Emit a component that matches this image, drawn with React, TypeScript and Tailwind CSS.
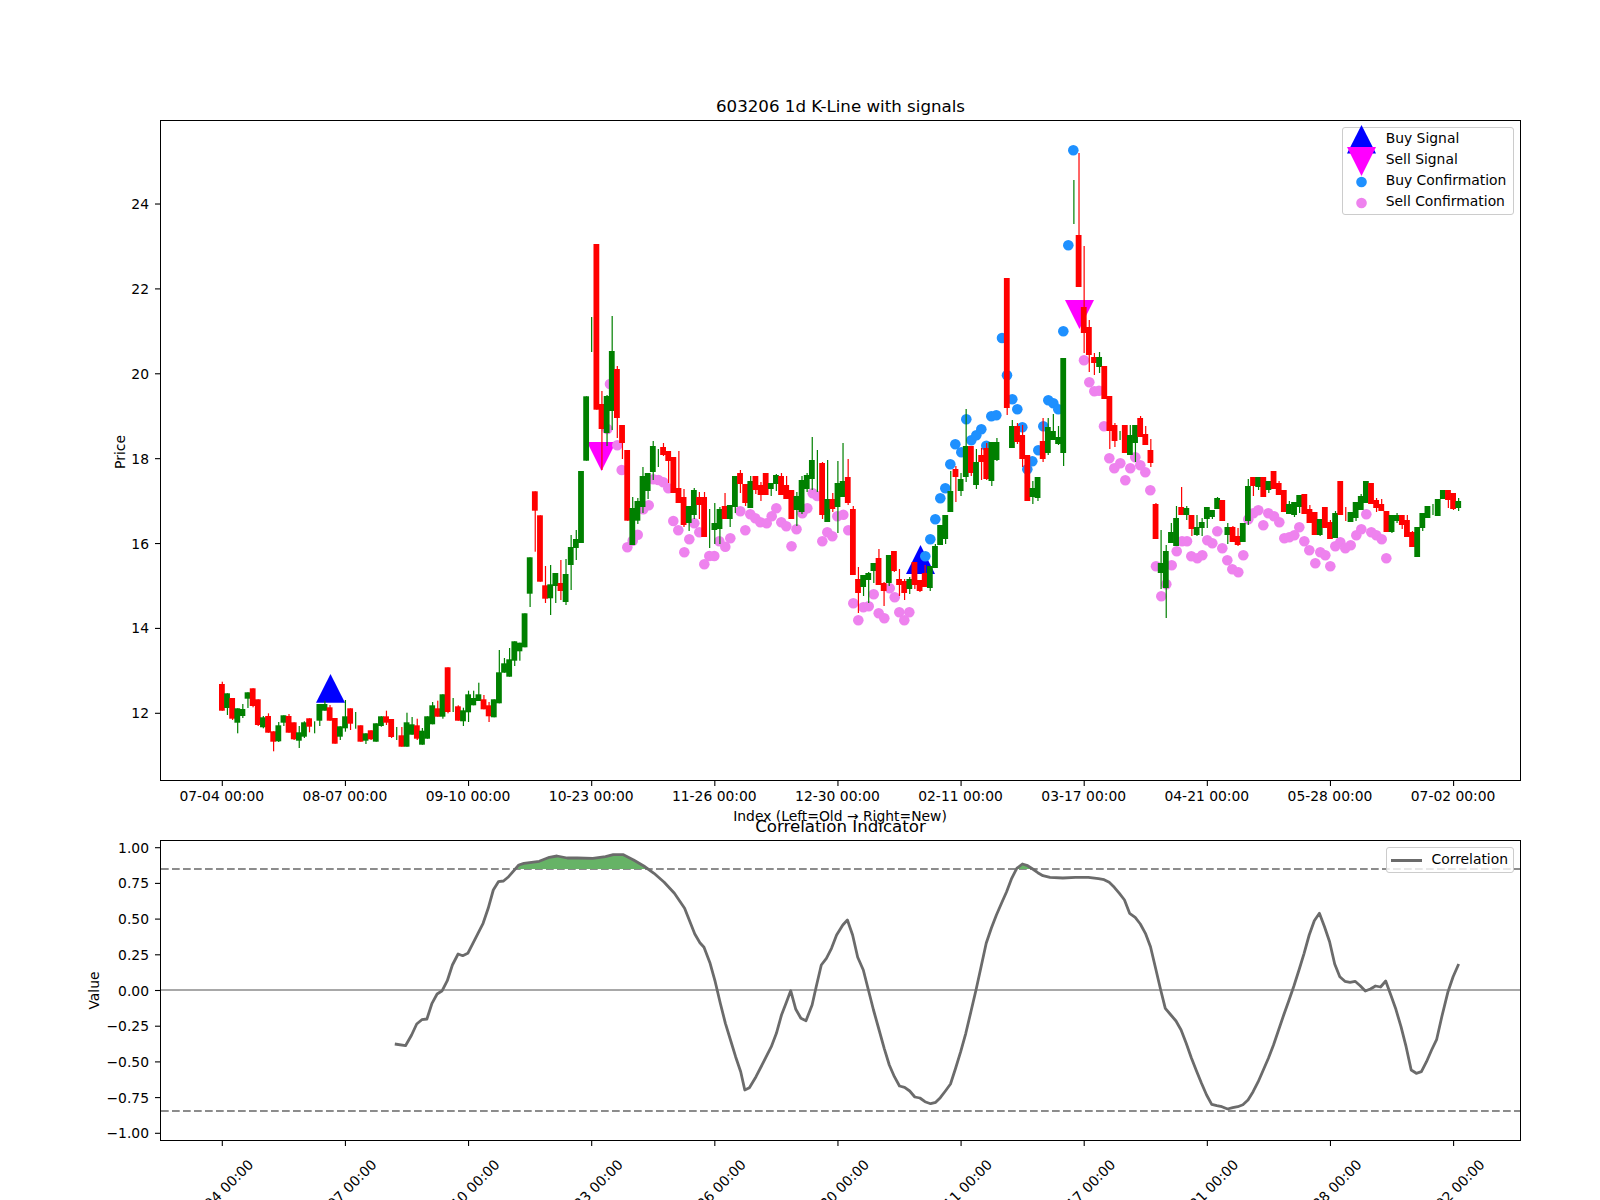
type Candle = [number, 'r' | 'g', number, number, number?, number?];

// index, colour, body top, body bottom, wick top, wick bottom (page px)
const candles: Candle[] = [
  [0,'r',684,710.7,681.7],[1,'g',693.3,708,693.3,715],[2,'r',698,718.7,698,720],[3,'g',708.3,722.7,708.3,733.3],
  [4,'g',709,716,704,718],[5,'g',692.3,698.7,692.3,708],[6,'r',688.3,706,688.3,707.3],[7,'r',699.3,725,699.3,726],
  [8,'g',717.3,727.3,716,728.3],[9,'r',716,732.7,713.3],[10,'r',731.3,741.7,731.3,751.3],[11,'g',725.3,741.3,722,742],
  [12,'g',715.3,722.7,715.3,726],[13,'r',716,732.7,714],[14,'r',722.3,739.3,722.3,740],[15,'g',732.3,740.7,726,748],
  [16,'g',722.3,736.7,721.3,738],[17,'r',718.3,726.7,718.3,732.3],[18,'g',727,727,721.3,733.3],[19,'g',704,720.7,704,726],
  [20,'g',704,710.7,700.7],[21,'r',707.3,720.7,705],[22,'r',718,743.7],[23,'g',726.3,736.7,726.3,740],
  [24,'g',716.3,728.3,700,731.7],[25,'r',708.3,723.7,708.3,730],[26,'g',720,720,712,728.7],[27,'r',725.3,741.7],
  [28,'g',733.3,740.7,733.3,744],[29,'r',730.3,739.3,730.3,740],[30,'g',723.3,741.7],[31,'g',716.3,726,716.3,726.7],
  [32,'r',716.3,722.7,710.7,725],[33,'r',719,737,719,738],[34,'g',733,733,727,740],[35,'r',735.3,746.7,727],
  [36,'g',722.3,746.7,712.7],[37,'g',724.3,734.7,717],[38,'r',725.3,738.7,718.7,740],[39,'g',730.7,744.7,728],
  [40,'g',716.3,738.7],[41,'g',705.3,724.3,702],[42,'r',708.3,716.7,700.7],[43,'g',694.3,716.7,694.3,718.7],
  [44,'r',667.3,712,667.3,713.3],[45,'g',705,705,698,712],[46,'r',706.3,720.7,705.3],[47,'g',710.3,721.3,707.7,726],
  [48,'g',694.3,712.3,690.7,722],[49,'g',698,705.3,690.7],[50,'g',694.3,701,682.7],[51,'r',699.3,709.3,695],
  [52,'r',705.3,716.3,702,722],[53,'g',699.3,717.3],[54,'g',672.3,703.3,650],[55,'g',663.3,672.7,658],
  [56,'g',659.3,676.7,648],[57,'g',641.3,660.7,641.3,666],[58,'g',642.7,651.3,642.7,660.7],[59,'g',613.3,647.3],
  [60,'g',557.3,593.7,557.3,607],[61,'r',491.3,510.7,491.3,551.7],[62,'r',515.3,581.7],[63,'r',585.3,598.7,566,603],
  [64,'g',584.3,598.3,565,615],[65,'g',573,586,573,603],[66,'r',583,591,560,600],[67,'g',574,602,559,605],
  [68,'g',547,565,535,590],[69,'g',539,548,530,560],[70,'g',471,543],[71,'g',396.3,460.7],[72,'g',335,335,317,352],
  [73,'r',244,409.7],[74,'r',404,429,391,470],[75,'g',396,433,395,446],[76,'g',351,411,316,430],[77,'r',369,418,366,438],
  [78,'r',425,443,425,459],[79,'r',450,520.7],[80,'g',508,545,497],[81,'g',501,520.7,498,524],[82,'g',476,507,467,513],
  [83,'g',473,491,473,499],[84,'g',446,472,441,480],[85,'g',458,458,449,467],[86,'r',447,455,443,456],[87,'r',451,461,451,483],
  [88,'r',457,493],[89,'r',488,503,451],[90,'r',497,525,489,527],[91,'g',506,523,506,531],[92,'g',490,515,488,519],
  [93,'r',497,505,492,519],[94,'r',497,537,492],[95,'g',528,528,509,548],[96,'g',523,530,503,544],[97,'g',509,529,507,544],
  [98,'r',506,519,493],[99,'g',505,519,505,527],[100,'g',476,507,476,513],[101,'r',473,484,470,493],[102,'r',484,503,484,506],
  [103,'g',481,508,476],[104,'r',476,490,476,494],[105,'r',485,495,482,501],[106,'r',473,495],[107,'g',483,489,483,496],
  [108,'g',475,484,474,491],[109,'r',476,495,473],[110,'r',485,499,476],[111,'r',490,519],[112,'g',496,510,492,526],
  [113,'g',480,512,476,514],[114,'g',475,489,473,492],[115,'g',460,479,437,490],[116,'g',471,471,450,492],[117,'r',463,515,462,519],
  [118,'g',499,522,460],[119,'r',499,509,493,512],[120,'g',483,507,461,533],[121,'g',481,497,443],[122,'r',477,503,459,505],
  [123,'r',509,575,506],[124,'r',579,593,567,613],[125,'g',575,587,575,596],[126,'g',573,580,572,603],[127,'g',563,571,563,583],
  [128,'r',558,585,549],[129,'r',583,591,582,606],[130,'g',555,583,555,586],[131,'r',551,571,551,572],[132,'r',579,585,569,596],
  [133,'r',581,593,579,600],[134,'g',579,589,577,594],[135,'r',562,585,562,589],[136,'r',580,591,580,592],[137,'r',573,587,565],
  [138,'g',566,588,566,591],[139,'g',546,568,544],[140,'g',525,545],[141,'g',515,539,515,544],[142,'g',491,512,471],
  [143,'r',469,477,466,502],[144,'g',479,491,473,496],[145,'g',446,477,409,482],[146,'r',446,473,446,476],[147,'g',462,485,449,489],
  [148,'r',455,462,448,480],[149,'r',448,479,443,480],[150,'g',442,481,442,486],[151,'g',442,460,438,461],
  [153,'r',278,408,278,415],[154,'g',426,448,420],[155,'r',426,442,423,444],[156,'r',435,459,425,467],[157,'r',455,501],
  [158,'g',488,497,481,504],[159,'g',477,498,477,501],[160,'r',441,459,418,462],[161,'g',427,453,418,455],[162,'g',431,440,414],
  [163,'g',437,444,426,445],[164,'g',358,453,358,466],[166,'g',200,200,180,224],[167,'r',235,287,153],[168,'r',307,333,246,353],
  [169,'r',327,355,320,372],[170,'r',357,363,353,375],[171,'g',357,367,352,373],[172,'r',366,399],[173,'r',396,431,396,449],
  [174,'r',425,441,423,447],[175,'g',436,436,431,440],[176,'r',425,453],[177,'g',435,455,425],[178,'g',425,443,425,462],
  [179,'r',418,437,416],[180,'r',434,445,426],[181,'r',450,463,439,467],[182,'r',504,539,503],[183,'g',563,573,530,589],
  [184,'g',551,588,545,618],[185,'g',532,543,523],[186,'g',518,546,506],[187,'r',507,515,487],[188,'g',508,515,506,520],
  [189,'r',515,529,515,536],[190,'g',527,535,515,536],[191,'g',522,528,518,536],[192,'g',507,519,507,528],[193,'g',510,517,510,519],
  [194,'g',498,509,497],[195,'r',500,521],[196,'g',527,535,523,544],[197,'r',527,542,526],[198,'r',536,545,528,546],
  [199,'g',523,542],[200,'g',486,521,479,525],[201,'r',477,486,477,496],[202,'g',477,487,477,490],[203,'r',477,497],
  [204,'g',481,490,481,493],[205,'r',471,489],[206,'r',483,495,481],[207,'r',490,512],[208,'g',504,514,501],
  [209,'g',502,515,502,517],[210,'g',495,507,495,513],[211,'r',494,514],[212,'r',509,523,505],[213,'r',512,535],
  [214,'g',519,535,519,536],[215,'r',507,528],[216,'r',522,539,520],[217,'g',513,538,511],[218,'r',481,515],
  [219,'r',514,514,507,521],[220,'g',512,522],[221,'g',502,518,502,521],[222,'g',496,510,494],[223,'g',481,503],
  [224,'r',483,504],[225,'r',500,508,498,512],[226,'r',504,511,499],[227,'r',511,532],[228,'g',515,532,515,533],
  [229,'g',515,521,513,523],[230,'r',515,525,515,529],[231,'r',520,537,515],[232,'r',532,547,531],[233,'g',527,557],
  [234,'g',513,528,513,531],[235,'g',506,518],[236,'g',510,510,504,515],[237,'g',499,516],[238,'g',490,499],
  [239,'r',490,500,490,508],[240,'r',493,509,493,510],[241,'g',501,508,498,511],
];

const sellDots: [number, number][] = [
  [610,384],[607.3,429],[617.3,445.3],[621.7,470],[627.3,547.3],[632.7,540.7],[637.7,534.7],[643.3,509.3],[648.7,505.3],
  [653.3,479.3],[658.3,480],[663.3,482.3],[668.3,488.3],[673.3,521],[678.3,530.3],[684.3,552.3],[689.3,539.3],[694.3,523.3],
  [699.3,532.3],[704.3,564.3],[709.3,556],[714.3,556],[719.3,541.3],[725.3,546.7],[730.3,538.3],[740.3,511.3],[745.3,530.3],
  [750.3,514.3],[755.3,518.3],[760.3,522.3],[766.7,523.3],[771.7,516.3],[776.3,508.3],[781.3,522.3],[786.3,526.3],[791.5,546.3],
  [796.5,529.3],[802.3,513.3],[807.3,508.3],[812.7,493.3],[817.3,496],[822.3,541.3],[827.3,532.3],[832.3,536.3],[837.3,516.3],
  [843.3,514.7],[848.3,530.3],[853.3,603.3],[858.3,620.3],[863.3,607.3],[868.7,606.3],[873.7,594.3],[878.7,613.3],[884.3,618.3],
  [889.7,588.3],[894.7,597.3],[899.3,612.3],[904.3,620.3],[909.3,612.3],
  [1084,360.3],[1089.3,382.3],[1094.3,391.3],[1099,390.7],[1104,426.3],[1109.3,458.3],[1114.3,468.3],[1120.3,463.3],[1125.3,480.3],
  [1130.3,468.3],[1135.3,457.3],[1140.3,465.3],[1145.3,472.3],[1150.3,490.3],[1156,566.3],[1161.3,596.3],[1166.3,584.3],[1171.7,565.3],
  [1176.7,551.3],[1182,541.3],[1187,541.3],[1191.3,556.3],[1197.3,558.3],[1202.3,555.3],[1207.3,540.3],[1212.3,543.3],[1217.3,531.3],
  [1222.3,548.3],[1227.3,560.3],[1232.3,569.3],[1238.3,572.3],[1243.3,555.3],[1248.3,519.3],[1253.3,513.3],[1258.3,510.3],[1263.3,525.3],
  [1268.3,513.3],[1274,516.3],[1279.3,522.3],[1284.3,538.3],[1289.3,537.3],[1294.3,535.3],[1299.3,527.3],[1304.3,541.3],[1309.3,550.3],
  [1315.3,563.3],[1320.3,552.3],[1325.3,555.3],[1330.3,566.3],[1335.3,546.3],[1340.3,542.3],[1345.3,548.3],[1350.7,545.3],[1356.3,535.3],
  [1361.3,529.3],[1366.3,514.3],[1371.3,532.3],[1376.3,535.3],[1381.7,539.3],[1386.3,558.3],
];

const buyDots: [number, number][] = [
  [925.3,556.3],[930.3,539.3],[935.3,519.3],[940.3,498.3],[945.3,488.3],[950.3,464.3],[955.3,444.3],[961.3,452.3],[966.3,419.3],
  [971.3,440.3],[976.3,435.3],[981.3,429.3],[986.3,445.7],[991.3,416.3],[996.3,415.3],[1002,338],[1007,375.3],[1012.3,399.3],
  [1017.3,409.3],[1022.3,427.3],[1027.3,469.3],[1032.3,461.3],[1038.3,450.3],[1043.3,426.3],[1048.3,400.3],[1053.3,403.3],[1058.3,409.3],
  [1063.3,331.3],[1068.3,245.3],[1073.3,150.3],
];

// correlation line, read off two crops: x = base + X / 1.96, y = 760 + Y / 3
const corrLeft: [number, number][] = [
  [617,852],[638,857],[650,825],[660,792],[670,779],[680,777],[690,730],[700,702],[710,692],[720,662],[730,615],[741,582],[750,587],
  [760,580],[770,550],[780,520],[790,490],[800,445],[810,390],[820,365],[830,363],[840,350],[860,315],[870,310],[900,304],[920,292],
  [935,288],[955,294],[975,294],[1005,295],[1030,290],[1045,284],[1065,284],[1085,300],[1105,318],[1125,340],[1145,367],[1165,400],
  [1185,445],[1205,522],[1215,548],[1223,562],[1235,610],[1245,665],[1255,730],[1265,790],[1275,840],[1285,890],[1295,935],[1303,990],
  [1312,983],[1325,950],[1340,905],[1355,860],[1365,820],[1375,765],[1385,725],[1393,692],[1403,748],[1413,775],[1423,782],[1435,735],
  [1443,680],[1453,615],[1463,595],[1473,565],[1483,525],[1495,495],
];
const corrRight: [number, number][] = [
  [93,480],[103,525],[113,592],[124,630],[134,690],[144,750],[155,810],[165,865],[175,915],[185,950],[195,978],[205,982],[215,993],
  [225,1011],[235,1014],[245,1025],[256,1031],[266,1027],[275,1013],[285,993],[295,972],[305,925],[315,875],[325,820],[335,755],[345,690],
  [355,620],[365,550],[375,505],[385,465],[395,430],[405,395],[415,355],[425,325],[436,312],[446,317],[456,327],[466,338],[476,347],
  [490,352],[515,354],[540,352],[565,352],[585,356],[596,359],[606,367],[616,382],[626,400],[636,420],[646,460],[657,472],[667,492],
  [677,520],[687,560],[697,625],[707,690],[716,745],[727,765],[737,783],[747,810],[757,850],[767,893],[777,932],[787,970],[797,1005],
  [807,1033],[817,1037],[827,1040],[838,1047],[848,1043],[858,1040],[868,1034],[878,1020],[888,995],[898,965],[908,930],[918,895],
  [928,855],[938,810],[948,765],[958,722],[968,678],[978,630],[988,580],[998,525],[1008,482],[1018,460],[1028,500],[1038,545],[1048,612],
  [1058,650],[1068,664],[1078,667],[1088,664],[1098,677],[1108,693],[1118,687],[1128,678],[1138,681],[1148,663],[1158,705],[1168,748],
  [1178,800],[1188,860],[1198,930],[1208,940],[1218,935],[1228,905],[1238,870],[1248,838],[1258,770],[1270,695],[1280,650],[1291,612],
];

const toPage = (base: number) => ([x, y]: [number, number]): [number, number] => [base + x / 1.96, 760 + y / 3];
const corrLine = [...corrLeft.map(toPage(80)), ...corrRight.map(toPage(800))];
const pts = (list: [number, number][]) => list.map(([x, y]) => `${x.toFixed(1)},${y.toFixed(1)}`).join(' ');

const fillA = pts([
  toPage(80)([858, 327]),
  ...corrLeft.filter(([x]) => x >= 860 && x <= 1105).map(toPage(80)),
  toPage(80)([1113, 327]),
]);
const fillB = pts([[425, 327], [436, 312], [446, 317], [456, 327]].map((p) => toPage(800)(p as [number, number])));

const tickLabels = ['07-04 00:00', '08-07 00:00', '09-10 00:00', '10-23 00:00', '11-26 00:00', '12-30 00:00', '02-11 00:00', '03-17 00:00', '04-21 00:00', '05-28 00:00', '07-02 00:00'];
const tickX = (n: number) => 222.3 + n * 123.13;
const candleX = (i: number) => 222 + i * 5.13;

function KLinePlot() {
  return (
    <svg viewBox="161 121 1359 659" className="block w-full h-full overflow-visible">
      <polygon points="316,702.7 345,702.7 330.5,674" fill="#0000ff" />
      <polygon points="906,574 935,574 920.5,545" fill="#0000ff" />
      <polygon points="587,442 616,442 601.5,471" fill="#ff00ff" />
      <polygon points="1065,300 1094,300 1079.5,329" fill="#ff00ff" />
      {buyDots.map(([x, y]) => <circle key={x} cx={x} cy={y} r="5.3" fill="#1e90ff" />)}
      {sellDots.map(([x, y]) => <circle key={x} cx={x} cy={y} r="5.3" fill="#ee82ee" />)}
      {candles.map(([i, c, top, bottom, wickTop, wickBottom]) => {
        const color = c === 'r' ? '#ff0000' : '#008000';
        const x = candleX(i);
        return (
          <g key={i} fill={color}>
            <rect x={x - 0.3} y={wickTop ?? top} width="1.2" height={(wickBottom ?? bottom) - (wickTop ?? top)} />
            {bottom > top && <rect x={x - 3} y={top} width="5.8" height={bottom - top} />}
          </g>
        );
      })}
      {tickLabels.map((label, n) => (
        <g key={label}>
          <line x1={tickX(n)} x2={tickX(n)} y1="780" y2="786" stroke="black" strokeWidth="1.1" />
          <text x={tickX(n) - 0.5} y="801" textAnchor="middle" className="text-[13.89px]">{label}</text>
        </g>
      ))}
      {[12, 14, 16, 18, 20, 22, 24].map((v) => {
        const y = 713.3 - (v - 12) * 42.44;
        return (
          <g key={v}>
            <line x1="155" x2="160" y1={y} y2={y} stroke="black" strokeWidth="1.1" />
            <text x="149" y={y + 5} textAnchor="end" className="text-[13.89px]">{v}</text>
          </g>
        );
      })}
      <text transform="translate(124.5 452) rotate(-90)" textAnchor="middle" className="text-[13.89px]">Price</text>
      <text x="840" y="821" textAnchor="middle" className="text-[13.89px]">Index (Left=Old → Right=New)</text>
    </svg>
  );
}

function CorrelationPlot() {
  return (
    <svg viewBox="161 841 1359 299" className="block w-full h-full overflow-visible">
      <line x1="161" x2="1520" y1="869" y2="869" stroke="#8c8c8c" strokeWidth="2.1" strokeDasharray="7.7 3.3" />
      <line x1="161" x2="1520" y1="1111" y2="1111" stroke="#8c8c8c" strokeWidth="2.1" strokeDasharray="7.7 3.3" />
      <line x1="161" x2="1520" y1="990" y2="990" stroke="#a8a8a8" strokeWidth="2.1" />
      <polygon points={fillA} fill="#66b366" />
      <polygon points={fillB} fill="#66b366" />
      <polyline points={pts(corrLine)} fill="none" stroke="#6b6b6b" strokeWidth="2.8" strokeLinejoin="round" />
      {tickLabels.map((label, n) => (
        <g key={label}>
          <line x1={tickX(n)} x2={tickX(n)} y1="1140" y2="1146" stroke="black" strokeWidth="1.1" />
          <text transform={`translate(${tickX(n) + 2} 1195.5) rotate(-45)`} textAnchor="middle" className="text-[13.89px]">{label}</text>
        </g>
      ))}
      {['1.00', '0.75', '0.50', '0.25', '0.00', '−0.25', '−0.50', '−0.75', '−1.00'].map((v, n) => {
        const y = 847.7 + n * 35.7;
        return (
          <g key={v}>
            <line x1="155" x2="160" y1={y} y2={y} stroke="black" strokeWidth="1.1" />
            <text x="149" y={y + 5} textAnchor="end" className="text-[13.89px]">{v}</text>
          </g>
        );
      })}
      <text transform="translate(99 990.5) rotate(-90)" textAnchor="middle" className="text-[13.89px]">Value</text>
    </svg>
  );
}

function LegendRow({ label, children }: { label: string; children: React.ReactNode }) {
  return (
    <div className="flex items-center h-[20.8px]">
      <svg viewBox="0 0 29 20" className="w-[29px] h-[20px] ml-[3.7px] overflow-visible shrink-0">{children}</svg>
      <span className="ml-[10px] leading-none">{label}</span>
    </div>
  );
}

export default function App() {
  return (
    <div className="w-[1600px] h-[1200px] bg-white text-black overflow-hidden font-['DejaVu_Sans',sans-serif]">
      <div className="h-[120px] ml-[160px] w-[1361px] flex items-end justify-center pb-[1px] text-[16.67px]">603206 1d K-Line with signals</div>
      <div className="relative ml-[160px] w-[1361px] h-[661px] border border-black">
        <KLinePlot />
        <div className="absolute top-[6px] right-[6px] w-[172px] h-[88.4px] pt-[1px] bg-white/80 border border-[#cccccc] rounded-[3px] text-[13.89px]">
          <LegendRow label="Buy Signal"><polygon points="0,24.5 29,24.5 14.5,-4" fill="#0000ff" /></LegendRow>
          <LegendRow label="Sell Signal"><polygon points="0,-3 29,-3 14.5,26" fill="#ff00ff" /></LegendRow>
          <LegendRow label="Buy Confirmation"><circle cx="14.5" cy="11" r="5.3" fill="#1e90ff" /></LegendRow>
          <LegendRow label="Sell Confirmation"><circle cx="14.5" cy="11" r="5.3" fill="#ee82ee" /></LegendRow>
        </div>
      </div>
      <div className="h-[59px] ml-[160px] w-[1361px] flex items-end justify-center pb-[1px] text-[16.67px]">Correlation Indicator</div>
      <div className="relative ml-[160px] w-[1361px] h-[301px] border border-black">
        <CorrelationPlot />
        <div className="absolute top-[6px] right-[6px] w-[128px] h-[26px] flex items-center gap-[9.5px] pl-[4px] bg-white/80 border border-[#cccccc] rounded-[3px] text-[13.89px]">
          <span className="block w-[31px] h-[3px] bg-[#6b6b6b]" />
          <span className="leading-none">Correlation</span>
        </div>
      </div>
    </div>
  );
}
